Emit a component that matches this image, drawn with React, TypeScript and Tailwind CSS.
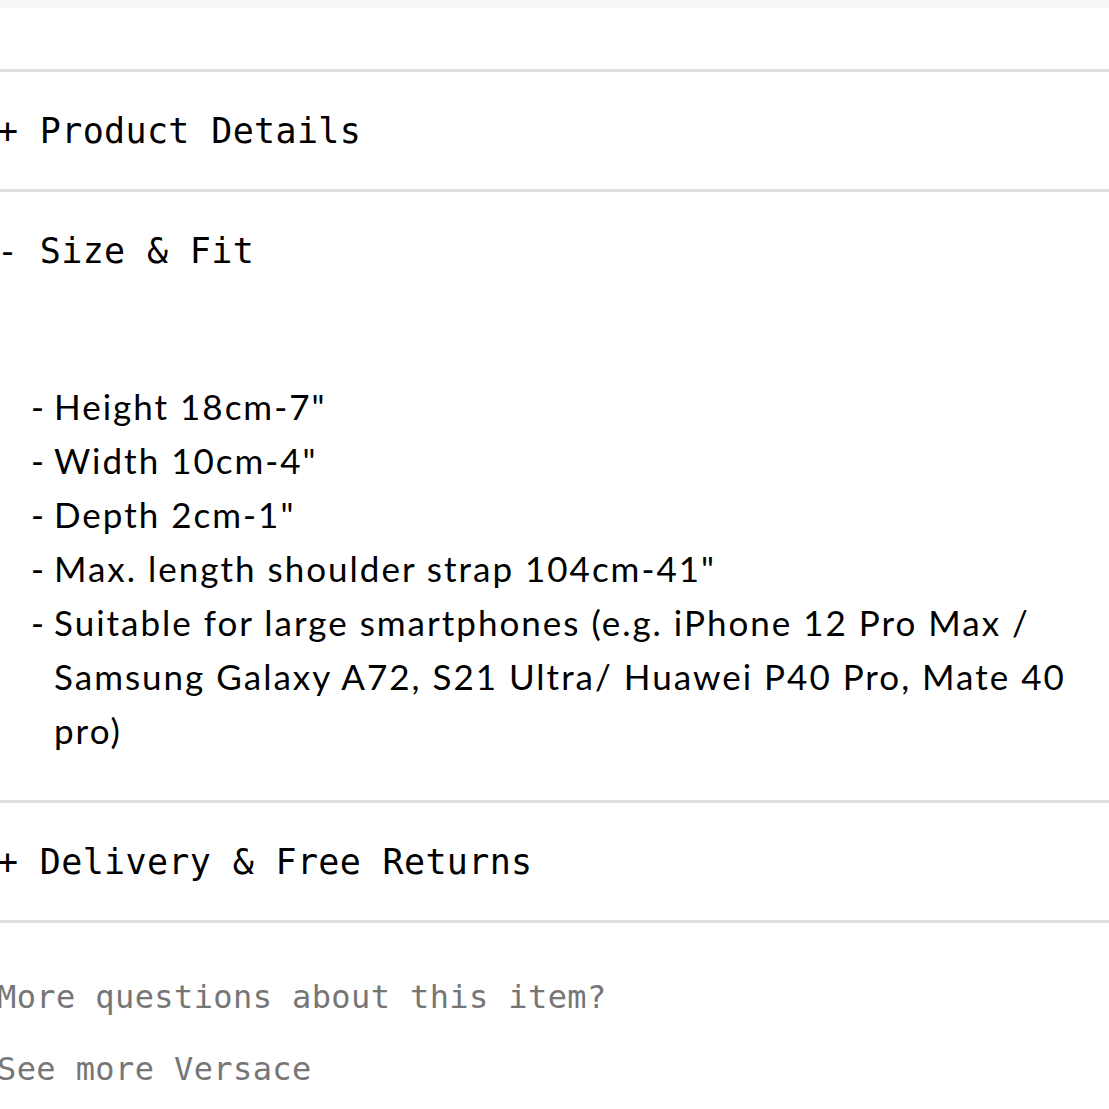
import React from "react";

const mono = { fontFamily: '"DejaVu Sans Mono", "Liberation Mono", monospace' };
const body = { fontFamily: 'Lato, "Noto Sans", sans-serif' };

function Header({ sign, label }: { sign: string; label: string }) {
  return (
    <div className="h-[117px] flex items-center pt-px">
      <span className="ml-[-3px] text-[35px] tracking-[0.35px] text-black whitespace-pre" style={mono}>
        {sign} {label}
      </span>
    </div>
  );
}

const items: string[] = [
  'Height 18cm-7"',
  'Width 10cm-4"',
  'Depth 2cm-1"',
  'Max. length shoulder strap 104cm-41"',
  "Suitable for large smartphones (e.g. iPhone 12 Pro Max / Samsung Galaxy A72, S21 Ultra/ Huawei P40 Pro, Mate 40 pro)",
];

export default function App() {
  return (
    <div className="w-[1109px] min-h-[1109px] bg-white overflow-hidden">
      <div className="h-2 bg-[#f6f6f6]" />
      <div className="h-[61px]" />
      <div className="border-t-[3px] border-[#e0e0e0]">
        <Header sign="+" label="Product Details" />
      </div>
      <div className="border-t-[3px] border-[#e0e0e0]">
        <Header sign="-" label="Size & Fit" />
        <ul className="pt-[70px] pb-[43px] text-[35px] leading-[54px] tracking-[2px] text-black" style={body}>
          {items.map((t, i) => (
            <li key={i} className="flex">
              <span className="w-[54px] shrink-0 pl-[31px]">-</span>
              <span className="flex-1 pr-[4px]">{t}</span>
            </li>
          ))}
        </ul>
      </div>
      <div className="border-t-[3px] border-[#e0e0e0]">
        <Header sign="+" label="Delivery & Free Returns" />
      </div>
      <div className="border-t-[3px] border-[#e0e0e0] pt-[56px] flex flex-col gap-[36px] text-[32px] leading-[36px] text-[#767676]" style={mono}>
        <span className="ml-[-3px] tracking-[0.4px]">More questions about this item?</span>
        <span className="ml-[-3px] tracking-[0.4px]">See more Versace</span>
      </div>
    </div>
  );
}
